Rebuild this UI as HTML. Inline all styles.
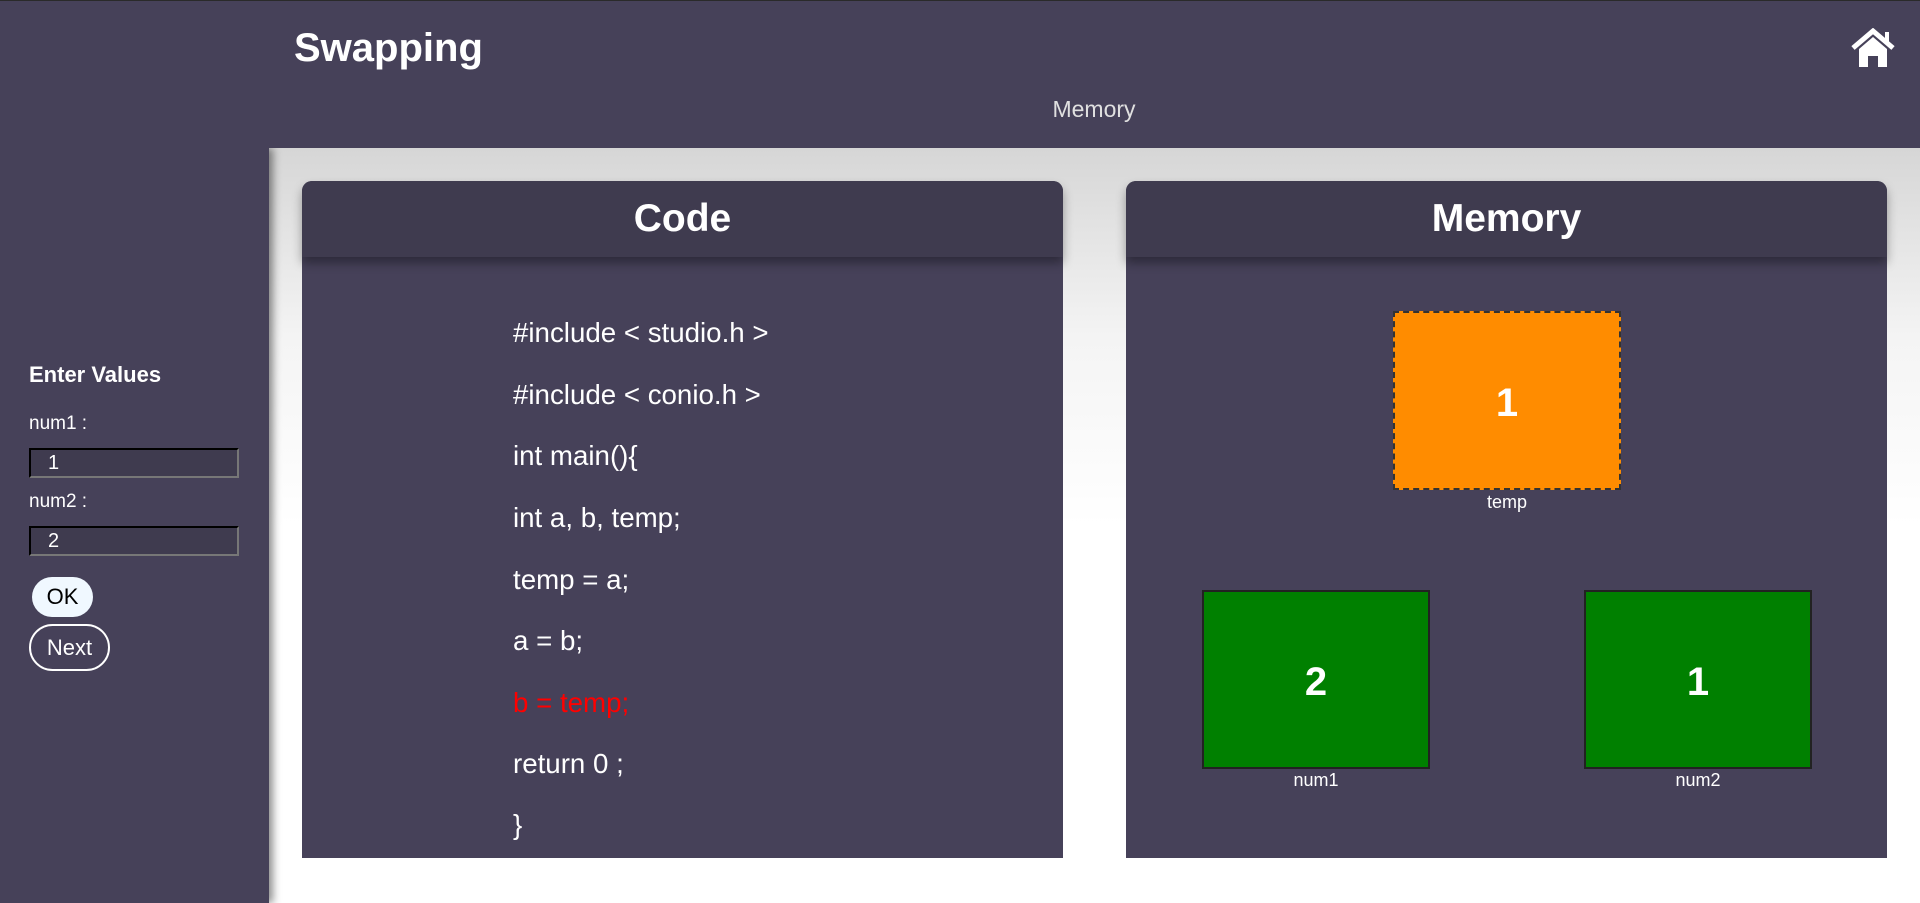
<!DOCTYPE html>
<html><head><meta charset="utf-8"><style>
*{box-sizing:border-box;margin:0;padding:0}
body{width:1920px;height:903px;overflow:hidden;font-family:"Liberation Sans",Arial,sans-serif;background:#fff;position:relative}
.top{position:absolute;left:0;top:0;width:1920px;height:148px;background:#464159;border-top:1px solid #2a2a2a;z-index:3}
.side{position:absolute;left:0;top:148px;width:269px;height:755px;background:#464159;box-shadow:4px 0 8px rgba(0,0,0,.45);z-index:2}
.main{position:absolute;left:269px;top:148px;width:1651px;height:755px;background:linear-gradient(180deg,#d6d6d6 0%,#f4f4f4 25%,#fff 50%)}
h1{position:absolute;left:294px;top:26px;color:#fff;font-size:40px;font-weight:bold;z-index:4}
.sub{position:absolute;left:0;width:2188px;text-align:center;top:96px;color:#e0e0e0;font-size:23px;z-index:4}
.card{position:absolute;top:181px;width:761px;height:677px;background:#464159;border-radius:10px 10px 0 0}
.ch{height:76px;background:#3f3b4f;border-radius:10px 10px 0 0;color:#fff;font-weight:bold;font-size:39px;text-align:center;line-height:76px;box-shadow:0 6px 10px rgba(0,0,0,.35);position:relative}
.l{position:absolute;left:211px;color:#fff;font-size:27.7px}
.box{position:absolute;width:228px;height:179px;background:#008000;border:2px solid #222;color:#fff;font-weight:bold;font-size:40px;text-align:center;line-height:181px}
.lbl{position:absolute;color:#fff;font-size:18px;text-align:center;width:228px}
.s{position:absolute;color:#fff;font-size:18px}
.inp{position:absolute;left:29px;width:210px;height:30px;background:#3f3b4f;border:2px inset #777;border-top-color:#222;border-left-color:#222;color:#fff;font-size:20px;padding-left:17px;line-height:26px}
</style></head><body>
<div class="top"></div>
<h1>Swapping</h1>
<div class="sub">Memory</div>
<svg style="position:absolute;left:1850px;top:28px;z-index:4" width="46" height="40" viewBox="0 0 46 40"><path d="M3 20 L23 3 L43 20" fill="none" stroke="#fff" stroke-width="5" stroke-linejoin="miter"/><rect x="35" y="4" width="4" height="11" fill="#fff"/><path d="M9 21 L23 9 L37 21 V39 H28 V28 H18 V39 H9 Z" fill="#fff"/></svg>
<div class="side">
<div class="s" style="left:29px;top:214px;font-weight:bold;font-size:22px">Enter Values</div>
<div class="s" style="left:29px;top:265px;font-size:19px">num1 :</div>
<div class="inp" style="top:300px">1</div>
<div class="s" style="left:29px;top:343px;font-size:19px">num2 :</div>
<div class="inp" style="top:378px">2</div>
<div style="position:absolute;left:32px;top:429px;width:61px;height:40px;background:#f0f8ff;border-radius:20px;font-size:22px;text-align:center;line-height:40px;color:#000">OK</div>
<div style="position:absolute;left:29px;top:476px;width:81px;height:47px;border:2px solid #fff;border-radius:24px;font-size:22px;text-align:center;line-height:43px;color:#fff">Next</div>
</div>
<div class="main"></div>
<div class="card" style="left:302px"><div class="ch">Code</div>
<div class="l" style="top:136px">#include &lt; studio.h &gt;</div>
<div class="l" style="top:198px">#include &lt; conio.h &gt;</div>
<div class="l" style="top:259px">int main(){</div>
<div class="l" style="top:321px">int a, b, temp;</div>
<div class="l" style="top:383px">temp = a;</div>
<div class="l" style="top:444px">a = b;</div>
<div class="l" style="top:506px;color:#f00">b = temp;</div>
<div class="l" style="top:567px">return 0 ;</div>
<div class="l" style="top:628px">}</div>
</div>
<div class="card" style="left:1126px"><div class="ch">Memory</div>
<div class="box" style="left:267px;top:130px;background:#ff8c00;border:2px dashed #333">1</div>
<div class="lbl" style="left:267px;top:311px">temp</div>
<div class="box" style="left:76px;top:409px">2</div>
<div class="lbl" style="left:76px;top:589px">num1</div>
<div class="box" style="left:458px;top:409px">1</div>
<div class="lbl" style="left:458px;top:589px">num2</div>
</div>
</body></html>
